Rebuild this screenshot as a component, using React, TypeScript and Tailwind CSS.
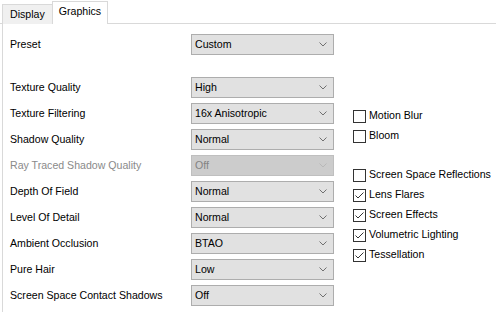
const font = { fontFamily: '"Liberation Sans", Arial, sans-serif' };

interface ComboProps {
  value: string;
  disabled?: boolean;
}

const Chevron = ({ disabled = false }: { disabled?: boolean }) => (
  <svg width="8" height="5" viewBox="0 0 8 5" className="shrink-0">
    <path
      d="M0.5 0.5 L4 4 L7.5 0.5"
      fill="none"
      stroke={disabled ? "#b8b8b8" : "#707070"}
      strokeWidth="1"
    />
  </svg>
);

const Combo = ({ value, disabled = false }: ComboProps) => (
  <div
    className={
      disabled
        ? "w-[143px] h-[21px] flex items-center justify-between border border-[#bfbfbf] bg-[#cccccc] pl-[3px] pr-[6px] text-[#838383]"
        : "w-[143px] h-[21px] flex items-center justify-between border border-[#adadad] bg-[#e1e1e1] pl-[3px] pr-[6px] text-black"
    }
  >
    <span>{value}</span>
    <Chevron disabled={disabled} />
  </div>
);

const Row = ({ label, value, disabled = false }: { label: string; value: string; disabled?: boolean }) => (
  <div className="flex items-center h-[21px]">
    <span className={disabled ? "w-[181px] text-[#8a8a8a]" : "w-[181px] text-black"}>{label}</span>
    <Combo value={value} disabled={disabled} />
  </div>
);

const CheckBox = ({ label, checked = false }: { label: string; checked?: boolean }) => (
  <div className="flex items-center h-[20px] gap-[3px]">
    <div className="w-[13px] h-[13px] border border-[#333333] bg-white flex items-center justify-center">
      {checked && (
        <svg width="11" height="11" viewBox="0 0 11 11">
          <path d="M1.5 5.5 L4 8 L9.5 2.5" fill="none" stroke="#333333" strokeWidth="1" />
        </svg>
      )}
    </div>
    <span className="text-black">{label}</span>
  </div>
);

const rows = [
  { label: "Texture Quality", value: "High" },
  { label: "Texture Filtering", value: "16x Anisotropic" },
  { label: "Shadow Quality", value: "Normal" },
  { label: "Ray Traced Shadow Quality", value: "Off", disabled: true },
  { label: "Depth Of Field", value: "Normal" },
  { label: "Level Of Detail", value: "Normal" },
  { label: "Ambient Occlusion", value: "BTAO" },
  { label: "Pure Hair", value: "Low" },
  { label: "Screen Space Contact Shadows", value: "Off" },
];

export default function App() {
  return (
    <div className="w-[496px] h-[312px] bg-white text-[10.6px] overflow-hidden" style={font}>
      {/* tab strip */}
      <div className="flex items-end h-[24px] pl-[2px] border-b border-[#d9d9d9]">
        <div className="h-[20px] px-[7px] flex items-center bg-[#f0f0f0] border border-b-0 border-[#d9d9d9] -mb-px">
          Display
        </div>
        <div className="h-[23px] px-[6px] pb-[2px] flex items-center bg-white border border-b-0 border-[#d9d9d9] -ml-px -mb-px relative">
          Graphics
        </div>
      </div>

      {/* panel */}
      <div className="ml-[2px] h-[288px] border-l border-[#d9d9d9] pl-[7px] pt-[10px] flex">
        <div className="flex flex-col">
          <Row label="Preset" value="Custom" />
          <div className="mt-[22px] flex flex-col gap-[5px]">
            {rows.map((r) => (
              <Row key={r.label} label={r.label} value={r.value} disabled={r.disabled} />
            ))}
          </div>
        </div>

        <div className="ml-[19px] mt-[72px] flex flex-col">
          <CheckBox label="Motion Blur" />
          <CheckBox label="Bloom" />
          <div className="mt-[19px] flex flex-col">
            <CheckBox label="Screen Space Reflections" />
            <CheckBox label="Lens Flares" checked />
            <CheckBox label="Screen Effects" checked />
            <CheckBox label="Volumetric Lighting" checked />
            <CheckBox label="Tessellation" checked />
          </div>
        </div>
      </div>
    </div>
  );
}
